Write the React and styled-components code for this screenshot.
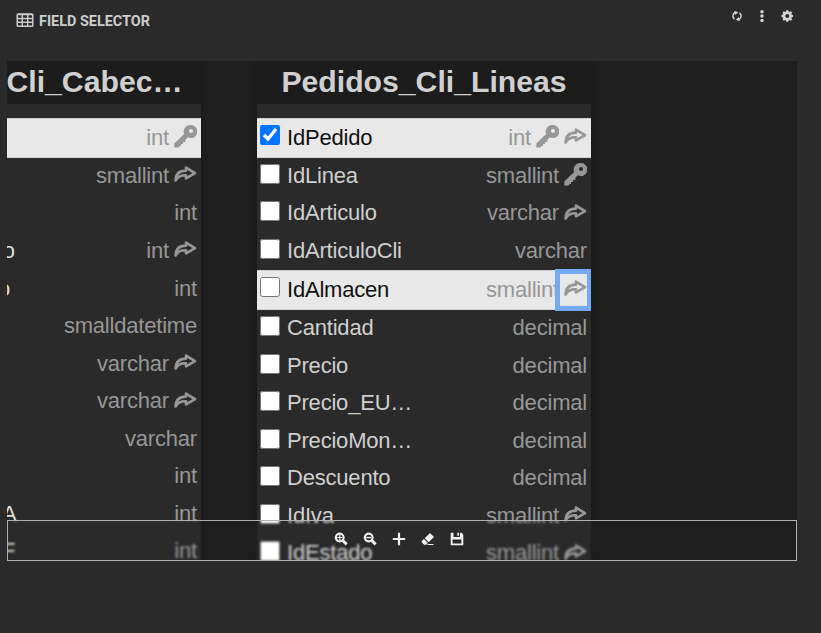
import React from "react";
import styled, { createGlobalStyle, css } from "styled-components";

const Global = createGlobalStyle`
  * { box-sizing: border-box; }
  html, body { margin: 0; background: #2a2a2a; overflow: hidden; }
  body { font-family: "Liberation Sans", Arial, sans-serif; color: #cfcfcf; }
`;

const Panel = styled.main`
  width: 821px;
  height: 633px;
  background: #2a2a2a;
  overflow: hidden;
`;

const Header = styled.header`
  display: flex;
  justify-content: space-between;
  height: 61px;
  padding: 0 27px 0 16px;
`;

const Heading = styled.h1`
  display: flex;
  align-items: center;
  gap: 5px;
  height: 40px;
  margin: 0;
  font: 700 15px/18px Roboto, sans-serif;
  color: #cdcdcd;
`;

const HeadingText = styled.span`
  padding-top: 2px;
  transform: scaleX(0.96);
  transform-origin: left center;
  white-space: nowrap;
`;

const Actions = styled.div`
  display: flex;
  align-items: center;
  gap: 11px;
  height: 32px;
  color: #d2d2cf;
`;

const Icon = styled.svg`
  display: block;
  flex: none;
  fill: currentColor;
`;

const Canvas = styled.section`
  display: flex;
  align-items: flex-start;
  gap: 56px;
  width: 790px;
  height: 500px;
  margin-left: 7px;
  background: #1e1e1e;
  overflow: hidden;
`;

const Table = styled.div`
  flex: none;
  width: ${(p) => p.$width}px;
  height: 500px;
  background: #2a2a2a;
  box-shadow: 0 0 3px rgba(0, 0, 0, 0.3);
  overflow: hidden;
`;

const Title = styled.h2`
  height: 43px;
  margin: 0 0 14.2px;
  background: #1c1c1c;
  color: #d0d0d0;
  font-size: 30.2px;
  font-weight: 700;
  line-height: 42px;
  text-align: ${(p) => p.$align};
  text-indent: ${(p) => (p.$align === "left" ? "-0.5px" : "0")};
  white-space: nowrap;
`;

const Label = styled.span`
  height: 37px;
  letter-spacing: -0.2px;
`;

const Row = styled.div`
  display: flex;
  align-items: center;
  height: 37.55px;
  padding: 0 4px 0 3px;
  font-size: 22px;
  line-height: 35.5px;
  color: #cfcfcf;
  ${(p) =>
    p.$active &&
    css`
      height: 39.45px;
      background: #e8e8e8;
      border: solid #d2d2d2;
      border-width: 1px 0;
      color: #111;
      line-height: 37px;
    `}
`;

const Check = styled.input`
  flex: none;
  width: 20px;
  height: 20px;
  margin: 0 7px 5px 0;
`;

const ClippedLabel = styled(Label)`
  margin-left: ${(p) => -3 - p.$cut}px;
  color: #ddd;
`;

const Type = styled.span`
  display: flex;
  align-items: center;
  gap: 5px;
  margin-left: auto;
  color: #979797;
`;

const LinkBox = styled.span`
  display: flex;
  width: 23px;
  height: 26px;
`;

const FocusFrame = styled.span`
  position: absolute;
  inset: -1px -5px -1px -9px;
  border: 5px solid #74aaf2;
  background: #e8e8e8;
`;

const FocusedLink = styled.span`
  position: relative;
  display: flex;
  align-items: center;
  width: 23px;
  height: 40px;

  & > svg {
    position: relative;
  }
`;

const Toolbar = styled.nav`
  position: relative;
  display: flex;
  align-items: center;
  justify-content: center;
  gap: 15px;
  width: 790px;
  height: 41px;
  margin: -41px 0 0 7px;
  padding: 0 6px 3px 0;
  border: 1px solid #b0b0b0;
  color: #f0f0f0;
  backdrop-filter: blur(1px);
`;

const TableIcon = () => (
  <Icon width="18" height="15" viewBox="0 0 18 15">
    <path fillRule="evenodd" d="M2 0.3H16Q17.5 .3 17.5 1.8V12.5Q17.5 14 16 14H2Q.5 14 .5 12.5V1.8Q.5 .3 2 .3ZM2 2.3V4.8H5.6V2.3ZM7 2.3V4.8H11V2.3ZM12.4 2.3V4.8H16V2.3ZM2 6.2V8.6H5.6V6.2ZM7 6.2V8.6H11V6.2ZM12.4 6.2V8.6H16V6.2ZM2 10V12.4H5.6V10ZM7 10V12.4H11V10ZM12.4 10V12.4H16V10Z" />
  </Icon>
);

const RefreshIcon = () => (
  <Icon width="14" height="14" viewBox="0 0 14 14">
    <path d="M4.5 10.2A4 4 0 0 1 5 3.5M9 10.5A4 4 0 0 0 9.5 3.8" fill="none" stroke="currentColor" strokeWidth="1.5" />
    <path d="M4.2 1.7L8.3 3.2 5.2 6ZM9.8 12.3L5.7 10.8 8.8 8Z" />
  </Icon>
);

const DotsIcon = () => (
  <Icon width="14" height="14" viewBox="0 0 14 14">
    <circle cx="7" cy="2.8" r="1.75" />
    <circle cx="7" cy="7.1" r="1.75" />
    <circle cx="7" cy="11.4" r="1.75" />
  </Icon>
);

const GearIcon = () => (
  <Icon width="14" height="14" viewBox="0 0 14 14">
    <circle cx="7.3" cy="7" r="3.3" fill="none" stroke="currentColor" strokeWidth="2.6" />
    {[0, 45, 90, 135, 180, 225, 270, 315].map((a) => (
      <path key={a} d="M5.8 3.1L6.3 1.2H8.3L8.8 3.1Z" transform={`rotate(${a} 7.3 7)`} />
    ))}
  </Icon>
);

const KeyIcon = () => (
  <Icon width="23" height="26" viewBox="0 0 23 26">
    <path fillRule="evenodd" d="M16.2 .1A6.5 6.5 0 1 1 13.8 12.3L11.4 14.7V17.1H9.1V19.1H7V21.1H5.6L4.4 22.4H.3V18.6L10.1 9A6.5 6.5 0 0 1 16.2 .1ZM17 3.9A2 2 0 1 0 17 7.9A2 2 0 1 0 17 3.9Z" />
  </Icon>
);

const ShareIcon = () => (
  <Icon width="23" height="26" viewBox="0 0 23 26">
    <path d="M1.6 17.5C1.8 10.8 5.5 7.6 12 7.6V4.6L21 10.2L12 15.3V12.3C7 12 3.8 13.6 1.6 17.5Z" fill="none" stroke="currentColor" strokeWidth="2.6" strokeLinejoin="round" />
  </Icon>
);

const ZoomIcon = ({ plus }) => (
  <Icon width="14" height="14" viewBox="0 0 14 14">
    <path fillRule="evenodd" d="M5.8 .6A4.9 4.9 0 0 1 10.1 7.7L13.7 11.3L11.6 13.4L8 9.8A4.9 4.9 0 1 1 5.8 .6ZM5.8 2.7A2.8 2.8 0 1 0 5.8 8.3A2.8 2.8 0 1 0 5.8 2.7Z" />
    <path d={plus ? "M3.3 4.9H5.2V3H6.4V4.9H8.3V6.1H6.4V8H5.2V6.1H3.3Z" : "M3.3 4.8H8.3V6.2H3.3Z"} />
  </Icon>
);

const PlusIcon = () => (
  <Icon width="14" height="14" viewBox="0 0 14 14">
    <path d="M5.9 .8H8.1V5.9H13.2V8.1H8.1V13.2H5.9V8.1H.8V5.9H5.9Z" />
  </Icon>
);

const EraserIcon = () => (
  <Icon width="14" height="14" viewBox="0 0 14 14">
    <path d="M9 1L13 5L7.7 10.3L3.7 6.3ZM2.9 7.1L6.9 11.1L5.2 12.7H3.1L.6 10.2V9.3ZM7 12H12.5V13H6Z" />
  </Icon>
);

const SaveIcon = () => (
  <Icon width="14" height="14" viewBox="0 0 14 14">
    <path fillRule="evenodd" d="M.7 .8H3.5V5H10V.8H11.5L13.3 2.7V13.2H.7ZM2.6 7.5V11.5H11.4V7.5ZM7.3 .8H9V3.7H7.3Z" />
  </Icon>
);

const headerFields = [
  { type: "int", icons: ["key"], active: true },
  { type: "smallint", icons: ["link"] },
  { type: "int" },
  { type: "int", icons: ["link"], tail: "o", cut: 4.3 },
  { type: "int", tail: "o", cut: 9 },
  { type: "smalldatetime" },
  { type: "varchar", icons: ["link"] },
  { type: "varchar", icons: ["link"] },
  { type: "varchar" },
  { type: "int" },
  { type: "int", tail: "A", cut: 5 },
  { type: "int", tail: "F", cut: 5 },
];

const lineFields = [
  { name: "IdPedido", type: "int", icons: ["key", "link"], active: true, checked: true },
  { name: "IdLinea", type: "smallint", icons: ["key"] },
  { name: "IdArticulo", type: "varchar", icons: ["link"] },
  { name: "IdArticuloCli", type: "varchar" },
  { name: "IdAlmacen", type: "smallint", icons: ["link"], active: true, focused: true },
  { name: "Cantidad", type: "decimal" },
  { name: "Precio", type: "decimal" },
  { name: "Precio_EU…", type: "decimal" },
  { name: "PrecioMon…", type: "decimal" },
  { name: "Descuento", type: "decimal" },
  { name: "IdIva", type: "smallint", icons: ["link"] },
  { name: "IdEstado", type: "smallint", icons: ["link"] },
];

function FieldType({ field }) {
  return (
    <Type>
      <Label>{field.type}</Label>
      {(field.icons || []).map((kind) =>
        field.focused ? (
          <FocusedLink key={kind}>
            <FocusFrame />
            <ShareIcon />
          </FocusedLink>
        ) : (
          <LinkBox key={kind}>{kind === "key" ? <KeyIcon /> : <ShareIcon />}</LinkBox>
        )
      )}
    </Type>
  );
}

export default function App() {
  return (
    <Panel>
      <Global />
      <Header>
        <Heading>
          <TableIcon />
          <HeadingText>FIELD SELECTOR</HeadingText>
        </Heading>
        <Actions>
          <RefreshIcon />
          <DotsIcon />
          <GearIcon />
        </Actions>
      </Header>
      <Canvas>
        <Table $width={194}>
          <Title $align="left">Cli_Cabec…</Title>
          {headerFields.map((f, i) => (
            <Row key={i} $active={f.active}>
              {f.tail && <ClippedLabel $cut={f.cut}>{f.tail}</ClippedLabel>}
              <FieldType field={f} />
            </Row>
          ))}
        </Table>
        <Table $width={334}>
          <Title $align="center">Pedidos_Cli_Lineas</Title>
          {lineFields.map((f) => (
            <Row key={f.name} $active={f.active}>
              <Check type="checkbox" defaultChecked={f.checked} />
              <Label>{f.name}</Label>
              <FieldType field={f} />
            </Row>
          ))}
        </Table>
      </Canvas>
      <Toolbar>
        <ZoomIcon plus />
        <ZoomIcon />
        <PlusIcon />
        <EraserIcon />
        <SaveIcon />
      </Toolbar>
    </Panel>
  );
}
